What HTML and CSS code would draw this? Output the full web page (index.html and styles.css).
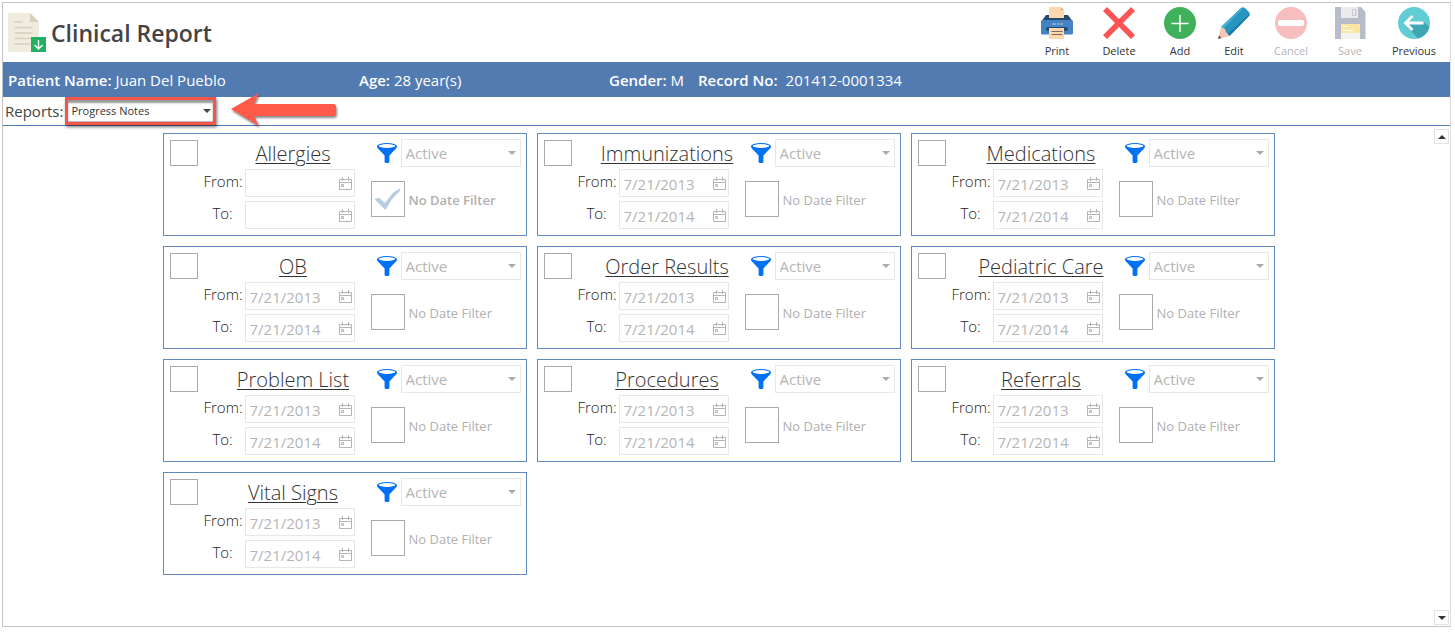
FILE: index.html
```
<!DOCTYPE html>
<html lang="en">
<head>
<meta charset="utf-8">
<title>Clinical Report</title>
<link rel="stylesheet" href="styles.css">
</head>
<body>
<svg class="sprite" aria-hidden="true">
  <symbol id="funnel" viewBox="0 0 20 20">
    <ellipse cx="10" cy="3.2" rx="10" ry="3.2"/>
    <path d="M0 3.2C0 4.6 1 5.6 2.2 6.8L7.6 12.6V19C7.6 20.3 12.4 20.3 12.4 19V12.6L17.8 6.8C19 5.6 20 4.6 20 3.2Z"/>
    <ellipse cx="10" cy="3" rx="8.3" ry="1.9" fill="#fff"/>
  </symbol>
  <symbol id="calendar" viewBox="0 0 13 13">
    <path d="M.5 2.5h12v10H.5zM.5 5.5h12M3.5 0v4M9.5 0v4" fill="none" stroke="currentColor"/>
    <path d="M2.5 7.5h2v2h-2z" fill="none" stroke="currentColor"/>
  </symbol>
</svg>
<div class="window">
  <header class="header">
    <svg class="logo" viewBox="0 0 38 40" aria-hidden="true">
      <path fill="#efebde" d="M0 0h22l9 9v30H0z"/>
      <path fill="#d5d0be" d="M22 0l9 9h-9z"/>
      <path stroke="#d5d0be" stroke-width="1.5" d="M6.500 9h8M6.500 14.500h18M6.500 20h18M6.500 25.500h18M6.500 31h16"/>
      <path fill="#22b062" d="M23 24h15v15H23z"/>
      <path fill="none" stroke="#fff" stroke-width="1.400" d="M30.500 27v9M26.500 32l4 4 4-4"/>
    </svg>
    <h1 class="title">Clinical Report</h1>
    <nav class="toolbar" aria-label="Actions">
      <button class="tool" type="button">
        <svg class="tool-icon" viewBox="0 0 32 32" aria-hidden="true">
          <path fill="#274b6d" d="M5 8h22l5 7H0z"/>
          <path fill="#4482c3" d="M1.500 13h29q1.500 0 1.500 1.500V26q0 1.500-1.500 1.500h-29Q0 27.500 0 26V14.500Q0 13 1.500 13z"/>
          <path fill="#fdd7ad" d="M8 0h11l4 4v7H8z"/>
          <path fill="#c9a883" d="M20 0l3 3h-3z"/>
          <rect x="5" y="20" width="22" height="4" rx="2" fill="#274b6d"/>
          <path fill="#fdd7ad" d="M8 21h15v11H8z"/>
          <path stroke="#7d6c5b" d="M10.500 24.500h11M10.500 27.500h11"/>
          <path stroke="#b9d4ef" stroke-dasharray="4 1 2 1" d="M11 17h11"/>
        </svg>
        <span>Print</span>
      </button>
      <button class="tool" type="button">
        <svg class="tool-icon" viewBox="0 0 32 32" aria-hidden="true"><path fill="#ff5456" d="M4 0l12 12L28 0l4 4-12 12 12 12-4 4-12-12L4 32l-4-4 12-12L0 4z"/></svg>
        <span>Delete</span>
      </button>
      <button class="tool" type="button">
        <svg class="tool-icon" viewBox="0 0 32 32" aria-hidden="true"><circle cx="16" cy="16" r="16" fill="#40b05a"/><path stroke="#fff" stroke-width="1.400" d="M16 8v17M7.500 16.500h17"/></svg>
        <span>Add</span>
      </button>
      <button class="tool" type="button">
        <svg class="tool-icon" viewBox="0 0 32 32" aria-hidden="true">
          <path fill="#2795bf" d="M3 20L22.500 1.500Q25-1 28 2l2.500 2.500Q33 7 30.500 9.500L11.500 29z"/>
          <path fill="#1c7ca5" d="M9.500 27L32 6.500Q32 8 30.500 9.500L11.500 29z"/>
          <path fill="#45aed3" d="M3 20L23 1l1.500 1L5 22z"/>
          <path fill="#f6c6b0" d="M3 20l4 2 1 3.500 3.500 3.500L0 32z"/>
          <path fill="#5c4d55" d="M1 28.500l2.500 2.500L0 32z"/>
        </svg>
        <span>Edit</span>
      </button>
      <button class="tool" type="button" disabled>
        <svg class="tool-icon" viewBox="0 0 32 32" aria-hidden="true"><circle cx="16" cy="16" r="16" fill="#f8bdbe"/><rect x="3" y="13" width="26" height="6" rx="2" fill="#fff"/></svg>
        <span>Cancel</span>
      </button>
      <button class="tool" type="button" disabled>
        <svg class="tool-icon" viewBox="0 0 32 32" aria-hidden="true">
          <path fill="#b8bcc9" d="M1 0h26l4.500 5v27H1z"/>
          <path fill="#ececee" d="M7 0h17v11H7z"/>
          <path fill="#c9ccd5" d="M18 2h4.500v7H18z"/>
          <path fill="#ececee" d="M19 3h2v5h-2z"/>
          <path fill="#fbe6a4" d="M7 17h19v9H7z"/>
          <path fill="#f3f3f4" d="M7 26h19v6H7z"/>
          <path stroke="#fff" d="M9 19.500h5M9 23.500h10"/>
        </svg>
        <span>Save</span>
      </button>
      <button class="tool" type="button">
        <svg class="tool-icon" viewBox="0 0 32 32" aria-hidden="true">
          <circle cx="16" cy="16" r="16" fill="#62ccd4"/>
          <path fill="#3fa7b3" d="M7 17l13 14.500A16 16 0 0 0 31.500 20L25 14.500z"/>
          <path fill="none" stroke="#fff" stroke-width="2.800" d="M8 16h17.500M14.500 9L7.500 16l7 7"/>
        </svg>
        <span>Previous</span>
      </button>
    </nav>
  </header>

  <section class="patient" aria-label="Patient">
    <div><b>Patient Name:</b> Juan Del Pueblo</div>
    <div><b>Age:</b> 28 year(s)</div>
    <div><b>Gender:</b> M</div>
    <div class="record"><b>Record No:</b><span>201412-0001334</span></div>
  </section>

  <div class="reports">
    <label for="report">Reports:</label>
    <div class="highlight">
      <select id="report" class="report-select"><option>Progress Notes</option></select>
      <svg class="arrow" viewBox="0 0 112 42" aria-hidden="true"><path fill="#ff5a49" d="M2 18L30 2l-5 11h79q3 0 3 3v6q0 3-3 3H25l5 10z"/></svg>
    </div>
  </div>

  <div class="content">
    <main class="cards">
      <section class="card">
        <div class="card-head"><input class="pick" type="checkbox" id="c1"><label class="name" for="c1">Allergies</label><svg class="funnel" aria-hidden="true"><use href="#funnel"/></svg><select class="status" aria-label="Allergies status" disabled><option>Active</option></select></div>
        <div class="card-body">
          <div class="dates">
            <label for="f1">From:</label><div class="date"><input id="f1" type="text" disabled><svg aria-hidden="true"><use href="#calendar"/></svg></div>
            <label for="t1">To:</label><div class="date"><input id="t1" type="text" disabled><svg aria-hidden="true"><use href="#calendar"/></svg></div>
          </div>
          <label class="nodate"><input type="checkbox" checked disabled><span>No Date Filter</span></label>
        </div>
      </section>
      <section class="card">
        <div class="card-head"><input class="pick" type="checkbox" id="c2"><label class="name" for="c2">Immunizations</label><svg class="funnel" aria-hidden="true"><use href="#funnel"/></svg><select class="status" aria-label="Immunizations status" disabled><option>Active</option></select></div>
        <div class="card-body">
          <div class="dates">
            <label for="f2">From:</label><div class="date"><input id="f2" type="text" value="7/21/2013" disabled><svg aria-hidden="true"><use href="#calendar"/></svg></div>
            <label for="t2">To:</label><div class="date"><input id="t2" type="text" value="7/21/2014" disabled><svg aria-hidden="true"><use href="#calendar"/></svg></div>
          </div>
          <label class="nodate"><input type="checkbox" disabled><span>No Date Filter</span></label>
        </div>
      </section>
      <section class="card">
        <div class="card-head"><input class="pick" type="checkbox" id="c3"><label class="name" for="c3">Medications</label><svg class="funnel" aria-hidden="true"><use href="#funnel"/></svg><select class="status" aria-label="Medications status" disabled><option>Active</option></select></div>
        <div class="card-body">
          <div class="dates">
            <label for="f3">From:</label><div class="date"><input id="f3" type="text" value="7/21/2013" disabled><svg aria-hidden="true"><use href="#calendar"/></svg></div>
            <label for="t3">To:</label><div class="date"><input id="t3" type="text" value="7/21/2014" disabled><svg aria-hidden="true"><use href="#calendar"/></svg></div>
          </div>
          <label class="nodate"><input type="checkbox" disabled><span>No Date Filter</span></label>
        </div>
      </section>
      <section class="card">
        <div class="card-head"><input class="pick" type="checkbox" id="c4"><label class="name" for="c4">OB</label><svg class="funnel" aria-hidden="true"><use href="#funnel"/></svg><select class="status" aria-label="OB status" disabled><option>Active</option></select></div>
        <div class="card-body">
          <div class="dates">
            <label for="f4">From:</label><div class="date"><input id="f4" type="text" value="7/21/2013" disabled><svg aria-hidden="true"><use href="#calendar"/></svg></div>
            <label for="t4">To:</label><div class="date"><input id="t4" type="text" value="7/21/2014" disabled><svg aria-hidden="true"><use href="#calendar"/></svg></div>
          </div>
          <label class="nodate"><input type="checkbox" disabled><span>No Date Filter</span></label>
        </div>
      </section>
      <section class="card">
        <div class="card-head"><input class="pick" type="checkbox" id="c5"><label class="name" for="c5">Order Results</label><svg class="funnel" aria-hidden="true"><use href="#funnel"/></svg><select class="status" aria-label="Order Results status" disabled><option>Active</option></select></div>
        <div class="card-body">
          <div class="dates">
            <label for="f5">From:</label><div class="date"><input id="f5" type="text" value="7/21/2013" disabled><svg aria-hidden="true"><use href="#calendar"/></svg></div>
            <label for="t5">To:</label><div class="date"><input id="t5" type="text" value="7/21/2014" disabled><svg aria-hidden="true"><use href="#calendar"/></svg></div>
          </div>
          <label class="nodate"><input type="checkbox" disabled><span>No Date Filter</span></label>
        </div>
      </section>
      <section class="card">
        <div class="card-head"><input class="pick" type="checkbox" id="c6"><label class="name" for="c6">Pediatric Care</label><svg class="funnel" aria-hidden="true"><use href="#funnel"/></svg><select class="status" aria-label="Pediatric Care status" disabled><option>Active</option></select></div>
        <div class="card-body">
          <div class="dates">
            <label for="f6">From:</label><div class="date"><input id="f6" type="text" value="7/21/2013" disabled><svg aria-hidden="true"><use href="#calendar"/></svg></div>
            <label for="t6">To:</label><div class="date"><input id="t6" type="text" value="7/21/2014" disabled><svg aria-hidden="true"><use href="#calendar"/></svg></div>
          </div>
          <label class="nodate"><input type="checkbox" disabled><span>No Date Filter</span></label>
        </div>
      </section>
      <section class="card">
        <div class="card-head"><input class="pick" type="checkbox" id="c7"><label class="name" for="c7">Problem List</label><svg class="funnel" aria-hidden="true"><use href="#funnel"/></svg><select class="status" aria-label="Problem List status" disabled><option>Active</option></select></div>
        <div class="card-body">
          <div class="dates">
            <label for="f7">From:</label><div class="date"><input id="f7" type="text" value="7/21/2013" disabled><svg aria-hidden="true"><use href="#calendar"/></svg></div>
            <label for="t7">To:</label><div class="date"><input id="t7" type="text" value="7/21/2014" disabled><svg aria-hidden="true"><use href="#calendar"/></svg></div>
          </div>
          <label class="nodate"><input type="checkbox" disabled><span>No Date Filter</span></label>
        </div>
      </section>
      <section class="card">
        <div class="card-head"><input class="pick" type="checkbox" id="c8"><label class="name" for="c8">Procedures</label><svg class="funnel" aria-hidden="true"><use href="#funnel"/></svg><select class="status" aria-label="Procedures status" disabled><option>Active</option></select></div>
        <div class="card-body">
          <div class="dates">
            <label for="f8">From:</label><div class="date"><input id="f8" type="text" value="7/21/2013" disabled><svg aria-hidden="true"><use href="#calendar"/></svg></div>
            <label for="t8">To:</label><div class="date"><input id="t8" type="text" value="7/21/2014" disabled><svg aria-hidden="true"><use href="#calendar"/></svg></div>
          </div>
          <label class="nodate"><input type="checkbox" disabled><span>No Date Filter</span></label>
        </div>
      </section>
      <section class="card">
        <div class="card-head"><input class="pick" type="checkbox" id="c9"><label class="name" for="c9">Referrals</label><svg class="funnel" aria-hidden="true"><use href="#funnel"/></svg><select class="status" aria-label="Referrals status" disabled><option>Active</option></select></div>
        <div class="card-body">
          <div class="dates">
            <label for="f9">From:</label><div class="date"><input id="f9" type="text" value="7/21/2013" disabled><svg aria-hidden="true"><use href="#calendar"/></svg></div>
            <label for="t9">To:</label><div class="date"><input id="t9" type="text" value="7/21/2014" disabled><svg aria-hidden="true"><use href="#calendar"/></svg></div>
          </div>
          <label class="nodate"><input type="checkbox" disabled><span>No Date Filter</span></label>
        </div>
      </section>
      <section class="card">
        <div class="card-head"><input class="pick" type="checkbox" id="c10"><label class="name" for="c10">Vital Signs</label><svg class="funnel" aria-hidden="true"><use href="#funnel"/></svg><select class="status" aria-label="Vital Signs status" disabled><option>Active</option></select></div>
        <div class="card-body">
          <div class="dates">
            <label for="f10">From:</label><div class="date"><input id="f10" type="text" value="7/21/2013" disabled><svg aria-hidden="true"><use href="#calendar"/></svg></div>
            <label for="t10">To:</label><div class="date"><input id="t10" type="text" value="7/21/2014" disabled><svg aria-hidden="true"><use href="#calendar"/></svg></div>
          </div>
          <label class="nodate"><input type="checkbox" disabled><span>No Date Filter</span></label>
        </div>
      </section>
    </main>
    <div class="scroll">
      <button class="scroll-btn up" type="button" aria-label="Scroll up"></button>
      <button class="scroll-btn down" type="button" aria-label="Scroll down"></button>
    </div>
  </div>
</div>
</body>
</html>
```
FILE: styles.css
```
* { box-sizing: border-box; }

body {
  margin: 0;
  padding: 2px 4px 6px 2px;
  background: #fff;
  color: #444;
  font-family: "Open Sans", "Noto Sans", sans-serif;
  font-size: 15px;
}

button, input, select { font: inherit; color: inherit; margin: 0; }

.sprite { display: none; }

.window {
  display: flex;
  flex-direction: column;
  min-height: calc(100vh - 8px);
  border: 1px solid #c3c3c3;
  border-right-color: #dcdcdc;
}

.header {
  display: flex;
  align-items: flex-start;
  height: 59px;
  padding: 4px 2px 0 5px;
}

.logo { width: 38px; height: 40px; margin-top: 6px; }

.title {
  flex: 1;
  margin: 9px 0 0 5px;
  font-size: 23px;
  line-height: 34px;
  font-weight: 600;
}

.toolbar {
  display: grid;
  grid-template-columns: 54px 70px 52px 56px 58px 60px 68px;
}

.tool {
  display: flex;
  flex-direction: column;
  align-items: center;
  gap: 4px;
  padding: 0;
  border: 0;
  background: none;
  color: #333;
  font-size: 11px;
  line-height: 16px;
}

.tool:disabled { color: #b5b5b5; }

.tool-icon { width: 32px; height: 32px; }

.patient {
  display: grid;
  grid-template-columns: 351px 250px 89px 1fr;
  align-items: center;
  height: 35px;
  padding: 0 5px;
  background: #527bb1;
  color: #fff;
}

.patient b { font-weight: 600; }

.record { display: flex; gap: 8px; }

.reports {
  display: flex;
  align-items: center;
  gap: 2px;
  height: 29px;
  padding-left: 2px;
  border-bottom: 1px solid #527bb1;
}

.highlight {
  position: relative;
  border: 3px solid #f5564a;
  box-shadow: 1px 2px 3px #0008;
}

.highlight::before {
  content: "";
  position: absolute;
  inset: 0;
  box-shadow: inset 0 3px 2px #0006;
  pointer-events: none;
}

.highlight::after {
  content: "";
  position: absolute;
  right: 2px;
  top: 9px;
  border: 4px solid transparent;
  border-top-color: #444;
  border-bottom: 0;
  pointer-events: none;
}

.report-select {
  display: block;
  width: 145px;
  height: 22px;
  padding: 0 3px;
  border: 0 solid #bbb;
  border-bottom-width: 1px;
  border-radius: 0;
  appearance: none;
  background: #fff;
  color: #333;
  font-size: 11px;
}

.arrow {
  position: absolute;
  left: 161px;
  top: -9px;
  width: 112px;
  height: 42px;
  filter: drop-shadow(1px 2px 1px #0007);
}

.content { display: flex; flex: 1; }

.cards {
  display: grid;
  flex: 1;
  grid-template-columns: repeat(auto-fit, 364px);
  justify-content: center;
  align-content: start;
  gap: 10px;
  padding: 7px 16px;
}

.card {
  display: flex;
  flex-direction: column;
  gap: 2px;
  padding: 5px 5px 6px 6px;
  border: 1px solid #6388ba;
}

.card-head { position: relative; display: flex; align-items: center; }

.card-head::after {
  content: "";
  position: absolute;
  right: 5px;
  top: 12px;
  border: 4px solid transparent;
  border-top-color: #aaa;
  border-bottom: 0;
  pointer-events: none;
}

.pick, .nodate input {
  appearance: none;
  flex: none;
  border: 1px solid #aaa;
  background: #fff;
}

.pick { width: 28px; height: 26px; }

.name {
  flex: 1;
  padding: 2px 0 0 12px;
  text-align: center;
  white-space: nowrap;
  font-size: 20px;
  line-height: 26px;
  font-weight: 300;
  color: #333;
  text-decoration: underline;
  text-decoration-thickness: 1px;
  text-underline-offset: 2px;
}

.funnel { width: 20px; height: 20px; margin-right: 4px; fill: #0070f5; }

.status {
  width: 120px;
  height: 28px;
  padding: 0 4px;
  border: 1px solid #e7e7e7;
  border-radius: 0;
  appearance: none;
  background: #fff;
  color: #b5b5b5;
  opacity: 1;
}

.card-body { display: flex; align-items: center; gap: 16px; padding-left: 34px; }

.dates {
  display: grid;
  grid-template-columns: 38px 110px;
  gap: 4px 3px;
}

.dates label {
  text-align: center;
  line-height: 24px;
  font-size: 15px;
  font-weight: 300;
  color: #222;
}

.date {
  display: flex;
  align-items: center;
  height: 28px;
  padding: 0 2px 0 4px;
  border: 1px solid #e7e7e7;
  color: #b5b5b5;
}

.date input {
  flex: 1;
  min-width: 0;
  padding: 2px 0 0;
  border: 0;
  background: none;
}

.date svg { width: 13px; height: 13px; }

.nodate {
  display: flex;
  align-items: center;
  gap: 4px;
  white-space: nowrap;
  font-size: 13px;
  color: #b0b0b0;
}

.nodate span { padding-top: 2px; }

.nodate input { width: 34px; height: 36px; }

.nodate input:checked::before {
  content: "";
  display: block;
  width: 26px;
  height: 22px;
  margin: 6px 3px;
  background: #b9cbe2;
  clip-path: polygon(0 50%, 18% 44%, 40% 68%, 72% 20%, 100% 0, 98% 12%, 68% 50%, 42% 100%);
}

.nodate input:checked + span { font-weight: 600; }

.scroll {
  display: flex;
  flex-direction: column;
  justify-content: space-between;
  width: 16px;
  padding: 3px 1px 1px 0;
}

.scroll-btn {
  display: grid;
  place-items: center;
  width: 15px;
  height: 15px;
  padding: 0;
  border: 1px solid #e2e2e2;
  background: #fff;
}

.scroll-btn::before {
  content: "";
  border: 4px solid transparent;
  border-top: 0;
  border-bottom-color: #333;
}

.scroll-btn.down::before { rotate: 180deg; }
```
